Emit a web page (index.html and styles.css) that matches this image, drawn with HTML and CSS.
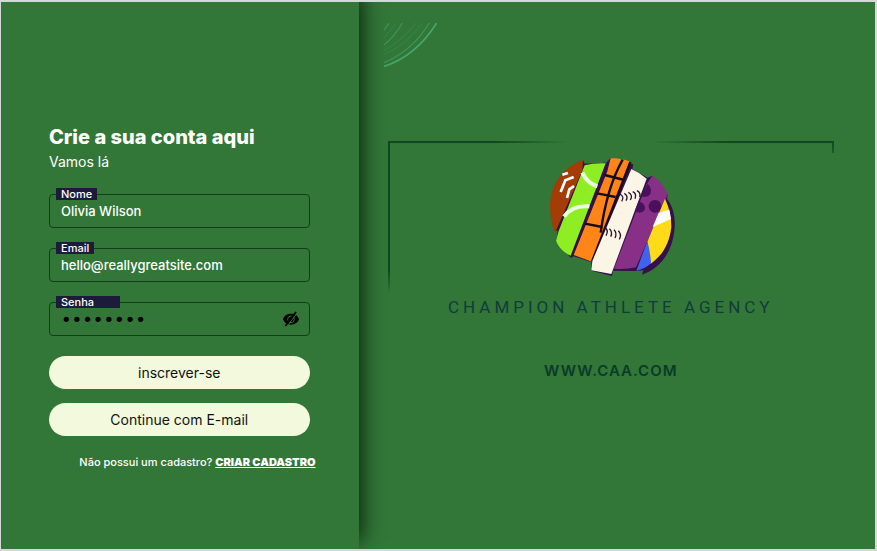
FILE: index.html
```html
<!DOCTYPE html>
<html lang="pt-BR">
<head>
<meta charset="utf-8">
<meta name="viewport" content="width=device-width, initial-scale=1">
<title>Champion Athlete Agency</title>
<link rel="stylesheet" href="styles.css">
</head>
<body>
<main class="page">
  <section class="signup">
    <h1 class="title">Crie a sua conta aqui</h1>
    <p class="subtitle">Vamos lá</p>
    <form class="form">
      <div class="field">
        <label class="field-label" for="name">Nome</label>
        <input class="field-input" id="name" type="text" value="Olivia Wilson">
      </div>
      <div class="field">
        <label class="field-label" for="email">Email</label>
        <input class="field-input" id="email" type="email" value="hello@reallygreatsite.com">
      </div>
      <div class="field">
        <label class="field-label field-label-wide" for="password">Senha</label>
        <input class="field-input field-password" id="password" type="password" value="password">
        <button class="toggle" type="button" aria-label="Mostrar senha">
          <svg width="16" height="16" viewBox="0 0 48 48" aria-hidden="true">
            <path d="M0 25C4 13 13 8 24 8s20 5 24 17c-4 11-13 16-24 16S4 36 0 25z"/>
            <circle class="eye-ring" cx="24" cy="25" r="10"/>
            <path class="eye-gap" d="M12 46L43 5"/>
            <path class="eye-slash" d="M7 45L39 3"/>
          </svg>
        </button>
      </div>
      <button class="action" type="submit">inscrever-se</button>
      <button class="action" type="button">Continue com E-mail</button>
    </form>
    <p class="register">Não possui um cadastro? <a class="register-link" href="#criar">CRIAR CADASTRO</a></p>
  </section>

  <section class="showcase">
    <svg class="arcs" width="54" height="45" viewBox="0 0 162 135" aria-hidden="true">
      <path class="arc-bright" d="M0 130Q95 100 158 0"/>
      <path class="arc" d="M0 119Q84 85 136 0"/>
      <path class="arc-dim" d="M0 96Q70 62 116 0"/>
      <path class="arc-dim" d="M0 82Q56 52 96 0M0 45L36 0"/>
      <path class="arc" d="M0 66Q34 38 55 0M0 22L15 0"/>
    </svg>
    <div class="brand">
      <svg class="ball" width="160" height="150" viewBox="0 0 480 450" role="img" aria-label="Bola multiesportiva">
        <path fill="#35104a" d="M156 57L161 68 226 65 238 52 307 70 304 84 350 110 364 104 410 160 408 174C426 196 433 226 431 260C425 329 392 381 333 401L337 388 314 390 246 389 243 405 181 389 181 363 128 346 120 351 76 302 80 268 71 271z"/>
        <path fill="#a33c05" d="M156 57C100 76 60 124 57 190Q57 235 70 272L76 267 154 88z"/>
        <g class="white-line">
          <path d="M94 101Q105 98 111 96"/>
          <path d="M128 108L103 118 89 153"/>
          <path d="M129 135L115 145 108 171"/>
        </g>
        <path fill="#8fee23" d="M161 73Q190 65 224 67L211 101 119 344C94 332 81 315 75 299L83 270z"/>
        <g class="seam-white">
          <path d="M154 95C164 118 180 130 199 136"/>
          <path d="M99 227C117 201 142 193 175 196"/>
        </g>
        <path fill="#ff8518" d="M239 52Q270 50 299 63L183 362 128 342 229 91z"/>
        <g class="court">
          <path d="M275 56C244 111 220 194 209 275"/>
          <path d="M221 102L280 117M199 157L254 168M162 248L214 258"/>
          <path d="M298 63L183 362"/>
        </g>
        <path fill="#faf5e5" d="M301 84Q325 94 347 113L241 399 181 388 184 360z"/>
        <g class="stitch">
          <path d="M267 159Q281 167 272 181M280 157Q293 165 285 179M292 154Q307 162 298 177M305 152Q318 158 312 173M318 149Q330 155 326 168"/>
          <path d="M222 260Q234 268 225 284M235 263Q246 273 239 287M249 266Q259 276 252 291M262 269Q273 280 265 295"/>
        </g>
        <path fill="#883087" d="M364 104Q393 120 410 160L315 379Q284 386 249 383L347 130z"/>
        <g fill="#48105e">
          <path d="M350 128Q367 144 356 162Q343 172 330 164z"/>
          <circle cx="372" cy="196" r="19"/>
          <path d="M323 180Q346 189 341 207Q331 221 311 211z"/>
        </g>
        <path fill="#ffda18" d="M402 173Q421 214 421 257C416 307 394 344 358 369L349 302z"/>
        <path fill="#fff" d="M383 216Q400 210 415 206L420 234 365 258z"/>
        <path fill="#3f63ee" d="M349 301Q358 333 360 367Q342 384 316 389z"/>
      </svg>
      <p class="brand-name">CHAMPION ATHLETE AGENCY</p>
    </div>
    <p class="site">WWW.CAA.COM</p>
  </section>
</main>
</body>
</html>
```
FILE: styles.css
```css
* {
  box-sizing: border-box;
}

body {
  margin: 0;
  font-family: Inter, "Open Sans", sans-serif;
  color: #fff;
  background: #d4d9d8;
}

h1,
p {
  margin: 0;
}

.page {
  display: grid;
  grid-template-columns: 9fr 13fr;
  min-height: 100vh;
  border: solid #d4d9d8;
  border-width: 2px 2px 2px 1px;
  background: #327638;
}

.signup {
  position: relative;
  padding: 122px 49px 48px 48px;
  background: #327638;
  box-shadow: 4px -8px 18px rgba(0, 20, 0, 0.75);
  clip-path: inset(0 -40px 0 0);
}

.title {
  font-size: 20px;
  line-height: 26px;
  font-weight: 800;
  white-space: nowrap;
}

.subtitle {
  font-size: 14px;
  line-height: 24px;
}

.form {
  display: grid;
  gap: 14px;
  margin-top: 20px;
}

.field {
  position: relative;
  display: flex;
  margin-bottom: 6px;
}

.field-label {
  position: absolute;
  top: -6px;
  left: 7px;
  padding: 0 5px;
  font-size: 11px;
  line-height: 12px;
  font-weight: 500;
  background: #1d1b3b;
}

.field-label-wide {
  min-width: 64px;
}

.field-input {
  width: 100%;
  height: 34px;
  padding: 0 11px;
  border: 1px solid #103e19;
  border-radius: 4px;
  font: 500 13px Inter, "Open Sans", sans-serif;
  color: #fff;
  background: transparent;
}

.field-password {
  padding-right: 36px;
  font: 18px "DejaVu Sans", sans-serif;
  color: #000;
}

.toggle {
  position: absolute;
  top: 9px;
  right: 11px;
  display: flex;
  padding: 0;
  border: 0;
  background: transparent;
}

.eye-ring,
.eye-gap,
.eye-slash {
  fill: none;
  stroke: #327638;
  stroke-width: 3;
}

.eye-slash {
  stroke: #000;
  stroke-width: 5;
}

.action {
  height: 33px;
  border: 0;
  border-radius: 17px;
  font: 14px Inter, "Open Sans", sans-serif;
  color: #111;
  background: #f3f9dc;
}

.register {
  margin: 18px -6px 0 0;
  font-size: 11px;
  line-height: 16px;
  font-weight: 500;
  text-align: right;
  white-space: nowrap;
}

.register-link {
  font-weight: 900;
  color: #fff;
}

.showcase {
  padding: 21px 41px 40px 29px;
}

.arcs {
  display: block;
  margin-left: -4px;
}

.arc,
.arc-bright,
.arc-dim {
  fill: none;
  stroke: #3d945a;
  stroke-width: 4;
}

.arc-bright {
  stroke: #46a66c;
  stroke-width: 5;
}

.arc-dim {
  stroke: #328047;
}

.brand {
  display: flex;
  flex-direction: column;
  align-items: center;
  margin-top: 73px;
  background:
    linear-gradient(90deg, #0c4b20 60%, transparent) 0 0 / 180px 2px no-repeat,
    linear-gradient(270deg, #0c4b20 60%, transparent) 100% 0 / 182px 2px no-repeat,
    linear-gradient(#0c4b20 85%, transparent) 0 0 / 2px 152px no-repeat,
    linear-gradient(#0c4b20, #1b5c2a) 100% 0 / 2px 12px no-repeat;
}

.ball {
  display: block;
}

.white-line,
.seam-white,
.court,
.stitch {
  fill: none;
  stroke: #fff;
  stroke-width: 8;
}

.seam-white {
  stroke: #eaffdc;
  stroke-width: 12;
}

.court {
  stroke: #190b18;
  stroke-width: 7;
}

.stitch {
  stroke: #291334;
  stroke-width: 4;
}

.brand-name {
  margin-top: 6px;
  font: 17px/20px Roboto, "Liberation Sans", sans-serif;
  letter-spacing: 4px;
  white-space: nowrap;
  color: #123b3d;
}

.site {
  margin-top: 44px;
  font-size: 15px;
  line-height: 20px;
  font-weight: 600;
  letter-spacing: 1px;
  text-align: center;
  color: #0b3b28;
}
```
